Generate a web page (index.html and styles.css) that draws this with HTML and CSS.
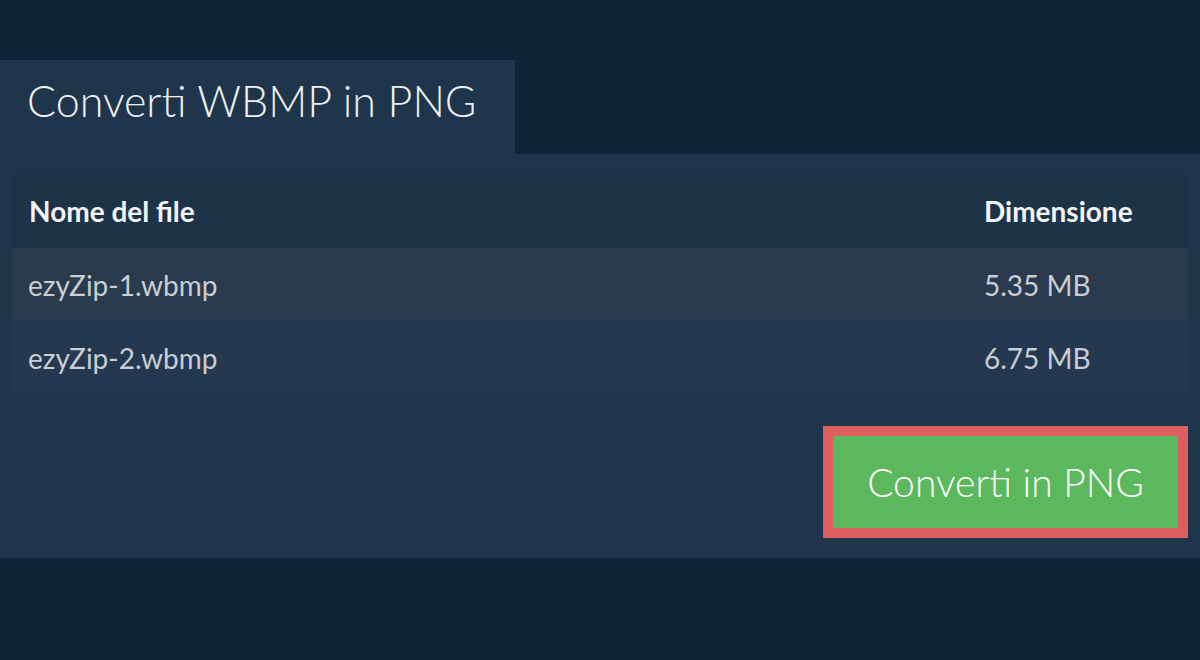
FILE: index.html
```html
<!DOCTYPE html>
<html lang="it">
<head>
<meta charset="utf-8">
<title>Converti WBMP in PNG</title>
<link rel="stylesheet" href="styles.css">
</head>
<body>
<div class="page">
  <div class="tab"><h1 class="title">Converti WBMP in PNG</h1></div>
  <div class="panel">
    <table class="files">
      <thead>
        <tr><th class="name">Nome del file</th><th class="size">Dimensione</th></tr>
      </thead>
      <tbody>
        <tr class="odd"><td class="name">ezyZip-1.wbmp</td><td class="size">5.35 MB</td></tr>
        <tr class="even"><td class="name">ezyZip-2.wbmp</td><td class="size">6.75 MB</td></tr>
      </tbody>
    </table>
    <div class="actions">
      <button class="convert">Converti in PNG</button>
    </div>
  </div>
</div>
</body>
</html>
```
FILE: styles.css
```css
html, body {
  margin: 0;
  padding: 0;
  background: #0e2338;
  font-family: Lato, "Open Sans", sans-serif;
}
.page {
  padding-top: 60px;
}
.tab {
  width: 515px;
  height: 94px;
  background: #1f354c;
  box-sizing: border-box;
  padding-left: 27px;
  display: flex;
  align-items: center;
}
.title {
  margin: 0;
  font-size: 43px;
  font-weight: 300;
  color: #eef0f2;
  line-height: 1;
  padding-bottom: 14px;
}
.panel {
  background: #1f354c;
  padding: 20px 12px 20px;
}
.files {
  width: 100%;
  border-collapse: collapse;
}
.files th, .files td {
  text-align: left;
  padding: 0 0 0 16px;
  box-sizing: border-box;
}
.files th {
  height: 74px;
  font-size: 28px;
  font-weight: 700;
  color: #f2f4f6;
  background: #1d3348;
  padding-left: 17px;
}
.files td {
  height: 72px;
  font-size: 28px;
  font-weight: 400;
  color: #c9ced4;
  padding-top: 2px;
}
.even td { height: 73px; }
.files .size { width: 204px; padding-left: 0; }
.odd td { background: #2a3b4e; }
.even td { background: #243850; }
.actions {
  display: flex;
  justify-content: flex-end;
  margin-top: 33px;
}
.convert {
  background: #5cb85c;
  border: 10px solid #dd605e;
  width: 365px;
  height: 112px;
  color: #ffffff;
  font-family: Lato, "Open Sans", sans-serif;
  font-size: 39px;
  font-weight: 300;
  padding: 0;
  cursor: pointer;
}
```
